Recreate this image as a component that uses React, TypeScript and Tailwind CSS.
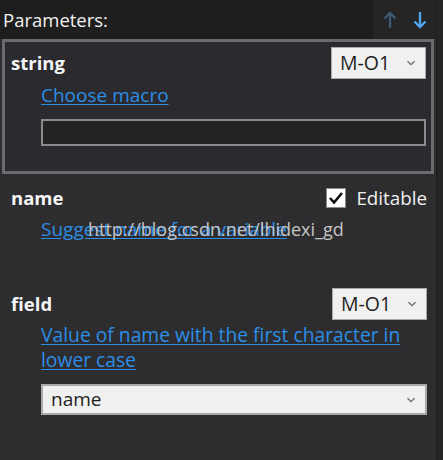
import React from "react";

const font = { fontFamily: '"Segoe UI", "Open Sans", "Noto Sans", sans-serif' };

function Chevron() {
  return (
    <svg width="10" height="6" viewBox="0 0 10 6" className="shrink-0">
      <path d="M1.5 1.2 L5 4.6 L8.5 1.2" fill="none" stroke="#6a6a6a" strokeWidth="1.3" />
    </svg>
  );
}

function Combo() {
  return (
    <div className="w-[95px] h-[32px] bg-[#f0f0f0] border border-[#a9a9a9] flex items-center justify-between pl-[8px] pr-[9px] text-[19.5px] text-[#1e1e1e]">
      <span>M-O1</span>
      <Chevron />
    </div>
  );
}

export default function App() {
  return (
    <div className="w-[443px] h-[460px] flex bg-[#2d2d30] text-white overflow-hidden" style={font}>
      <div className="w-[436px] flex flex-col">
        <div className="h-[39px] flex bg-[#1e1e1e]">
          <div className="flex-1 flex items-center pl-[3px] text-[18.5px] text-[#f1f1f1]">Parameters:</div>
          <div className="w-[63px] bg-[#252526] flex items-center justify-end gap-[16px] pr-[9px]">
            <svg width="14" height="18" viewBox="0 0 14 18">
              <path d="M7 2 V17 M1.5 7.5 L7 2 L12.5 7.5" fill="none" stroke="#3c5a75" strokeWidth="2.4" />
            </svg>
            <svg width="14" height="18" viewBox="0 0 14 18">
              <path d="M7 1 V16 M1.5 10.5 L7 16 L12.5 10.5" fill="none" stroke="#4fa6ee" strokeWidth="2.4" />
            </svg>
          </div>
        </div>
        <div className="mx-[2px] border-[3px] border-[#6b6b6e] bg-[#2b2b2f] h-[135px] pl-[6px] pr-[5px] pt-[5px]">
          <div className="flex items-center justify-between">
            <span className="font-bold text-[18.5px] text-[#f5f5f5]">string</span>
            <Combo />
          </div>
          <div className="pl-[30px]">
            <div className="mt-[1px] text-[19px] leading-[30px] text-[#2c8ee6] underline underline-offset-2">Choose macro</div>
            <div className="mt-[9px] h-[27px] bg-[#232325] border-[2px] border-[#8a8a8a]" />
          </div>
        </div>
        <div className="pl-[11px] pr-[9px] pt-[12px] relative">
          <div className="flex items-center justify-between h-[24px]">
            <span className="font-bold text-[18.5px] text-[#f5f5f5]">name</span>
            <div className="flex items-center gap-[10px]">
              <div className="w-[20px] h-[20px] bg-white border border-[#8a8a8a] flex items-center justify-center">
                <svg width="16" height="14" viewBox="0 0 16 14">
                  <path d="M2 7 L6 11.5 L14 2" fill="none" stroke="#111" strokeWidth="2.6" />
                </svg>
              </div>
              <span className="text-[18.8px] text-[#f1f1f1]">Editable</span>
            </div>
          </div>
          <div className="pl-[30px] mt-[4px] relative text-[19px] leading-[30px]">
            <span className="text-[#2c8ee6] underline underline-offset-2">Suggest name for a variable</span>
            <span className="absolute left-[77px] top-0 text-[18px] leading-[30px] text-[#c4c4c4] pointer-events-none">http://blog.csdn.net/lhidexi_gd</span>
          </div>
        </div>
        <div className="pl-[11px] pr-[9px] mt-[44px]">
          <div className="flex items-center justify-between">
            <span className="font-bold text-[18.5px] text-[#f5f5f5]">field</span>
            <Combo />
          </div>
          <div className="pl-[30px]">
            <div className="mt-[2px] text-[19.3px] leading-[25px] text-[#2c8ee6] underline underline-offset-2">
              Value of name with the first character in
              <br />
              lower case
            </div>
            <div className="mt-[12px] h-[31px] bg-[#f0f0f0] border-[2px] border-[#a9a9a9] flex items-center justify-between pl-[8px] pr-[9px] text-[19px] text-[#1e1e1e]">
              <span>name</span>
              <Chevron />
            </div>
          </div>
        </div>
      </div>
      <div className="w-[7px] bg-[#252526] border-l border-[#1c1c1c]" />
    </div>
  );
}
